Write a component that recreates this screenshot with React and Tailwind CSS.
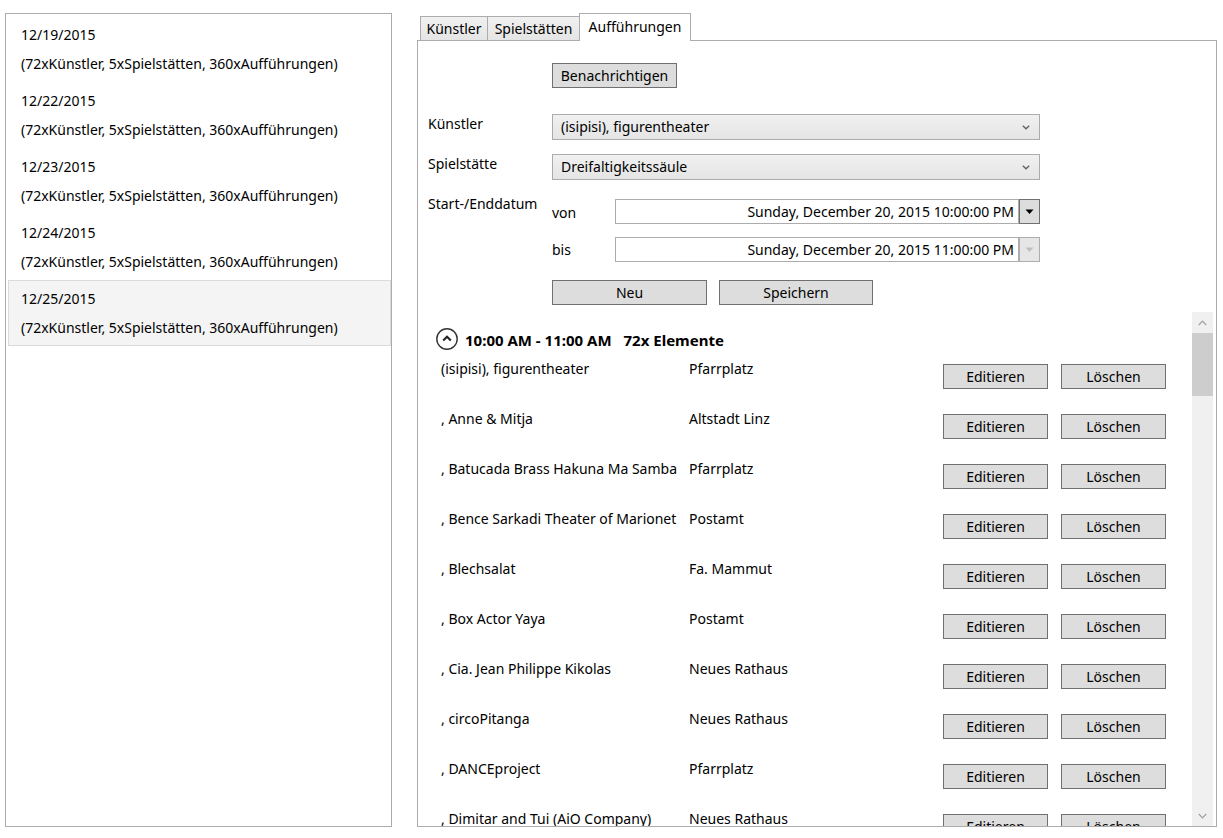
import React from "react";

const dates = ["12/19/2015", "12/22/2015", "12/23/2015", "12/24/2015", "12/25/2015"];

const rows = [
  ["(isipisi), figurentheater", "Pfarrplatz"],
  [", Anne & Mitja", "Altstadt Linz"],
  [", Batucada Brass Hakuna Ma Samba", "Pfarrplatz"],
  [", Bence Sarkadi Theater of Marionet", "Postamt"],
  [", Blechsalat", "Fa. Mammut"],
  [", Box Actor Yaya", "Postamt"],
  [", Cia. Jean Philippe Kikolas", "Neues Rathaus"],
  [", circoPitanga", "Neues Rathaus"],
  [", DANCEproject", "Pfarrplatz"],
  [", Dimitar and Tui (AiO Company)", "Neues Rathaus"],
];

function Btn({ children, className = "" }) {
  return (
    <div
      className={
        "flex items-center justify-center border border-[#707070] bg-[#dddddd] leading-[20px] text-black " +
        className
      }
    >
      {children}
    </div>
  );
}

function Combo({ value }) {
  return (
    <div className="flex h-[26px] w-[488px] items-center justify-between border border-[#acacac] bg-gradient-to-b from-[#f0f0f0] to-[#e5e5e5] pl-[8px] pr-[9px]">
      <span className="leading-[20px]">{value}</span>
      <svg width="8" height="5" viewBox="0 0 8 5">
        <path d="M0.8 0.8 L4 3.8 L7.2 0.8" fill="none" stroke="#606060" strokeWidth="1.3" />
      </svg>
    </div>
  );
}

function DatePicker({ value, disabled }) {
  return (
    <div className="flex h-[25px]">
      <div className="flex h-full w-[404px] items-center justify-end border border-[#acacac] bg-white pr-[4px] leading-[20px]">
        {value}
      </div>
      <div
        className={
          "flex h-full w-[21px] items-center justify-center border " +
          (disabled ? "border-[#adadad] bg-[#e6e6e6]" : "border-[#707070] bg-[#dddddd]")
        }
      >
        <svg width="9" height="6" viewBox="0 0 9 6">
          <path d="M0.5 0.5 L8.5 0.5 L4.5 5 Z" fill={disabled ? "#bfbfbf" : "#000"} />
        </svg>
      </div>
    </div>
  );
}

export default function App() {
  return (
    <div className="flex h-[838px] w-[1223px] bg-white font-['Noto_Sans',sans-serif] text-[14px] text-black">
      {/* Left list */}
      <div className="ml-[5px] mt-[13px] h-[814px] w-[387px] border border-[#acacac] pl-[2px] pt-[2px]">
        {dates.map((d, i) => (
          <div
            key={d}
            className={
              "h-[66px] w-[383px] border pl-[12px] pt-[8px] " +
              (i === 4 ? "border-[#dadada] bg-[#f4f4f4]" : "border-transparent")
            }
          >
            <div className="leading-[20px]">{d}</div>
            <div className="mt-[9px] leading-[20px]">(72xKünstler, 5xSpielstätten, 360xAufführungen)</div>
          </div>
        ))}
      </div>

      {/* Right tabs */}
      <div className="ml-[25px] mt-[13px] flex w-[800px] flex-col">
        <div className="flex h-[27px] items-start pl-[3px]">
          <div className="mt-[3px] flex h-[24px] w-[68px] items-center justify-center border-l border-r border-t border-[#acacac] bg-gradient-to-b from-[#f0f0f0] to-[#e5e5e5] leading-[20px]">
            Künstler
          </div>
          <div className="-ml-px mt-[3px] flex h-[24px] w-[93px] items-center justify-center border-l border-r border-t border-[#acacac] bg-gradient-to-b from-[#f0f0f0] to-[#e5e5e5] leading-[20px]">
            Spielstätten
          </div>
          <div className="relative z-10 -ml-px flex h-[28px] w-[112px] items-center justify-center border-l border-r border-t border-[#acacac] bg-white pb-[1px] leading-[20px]">
            Aufführungen
          </div>
        </div>

        <div className="flex h-[787px] flex-col border border-[#acacac] bg-white">
          <div className="flex flex-col pl-[10px]">
            <Btn className="ml-[124px] mt-[22px] h-[25px] w-[125px]">Benachrichtigen</Btn>

            <div className="mt-[26px] flex items-start">
              <div className="w-[124px] leading-[20px]">Künstler</div>
              <Combo value="(isipisi), figurentheater" />
            </div>

            <div className="mt-[14px] flex items-start">
              <div className="w-[124px] leading-[20px]">Spielstätte</div>
              <Combo value="Dreifaltigkeitssäule" />
            </div>

            <div className="mt-[14px] flex items-start">
              <div className="w-[124px] leading-[20px]">Start-/Enddatum</div>
              <div className="flex flex-col pt-[5px]">
                <div className="flex items-start">
                  <div className="w-[63px] pt-[4px] leading-[20px]">von</div>
                  <DatePicker value="Sunday, December 20, 2015 10:00:00 PM" />
                </div>
                <div className="mt-[13px] flex items-start">
                  <div className="w-[63px] pt-[3px] leading-[20px]">bis</div>
                  <DatePicker value="Sunday, December 20, 2015 11:00:00 PM" disabled />
                </div>
              </div>
            </div>

            <div className="ml-[124px] mt-[18px] flex gap-[12px]">
              <Btn className="h-[25px] w-[155px]">Neu</Btn>
              <Btn className="h-[25px] w-[154px]">Speichern</Btn>
            </div>
          </div>

          {/* Scroll area */}
          <div className="mt-[7px] flex min-h-0 flex-1">
            <div className="min-w-0 flex-1 overflow-hidden pl-[18px]">
              <div className="mt-[16px] flex h-[22px] items-center text-[15px] font-bold">
                <svg width="22" height="22" viewBox="0 0 22 22">
                  <circle cx="11" cy="11" r="10.2" fill="none" stroke="#333" strokeWidth="1.4" />
                  <path d="M7.2 12.6 L11 8.8 L14.8 12.6" fill="none" stroke="#222" strokeWidth="2.1" />
                </svg>
                <span className="ml-[7px] pt-[1px] leading-[20px]">10:00 AM - 11:00 AM</span>
                <span className="ml-[12px] pt-[1px] leading-[20px]">72x Elemente</span>
              </div>
              <div className="mt-[9px] flex flex-col pl-[5px]">
                {rows.map(([n, p]) => (
                  <div key={n} className="flex h-[50px] shrink-0 items-start">
                    <div className="w-[248px] leading-[20px]">{n}</div>
                    <div className="w-[254px] leading-[20px]">{p}</div>
                    <Btn className="mt-[5px] h-[25px] w-[105px]">Editieren</Btn>
                    <Btn className="ml-[13px] mt-[5px] h-[25px] w-[105px]">Löschen</Btn>
                  </div>
                ))}
              </div>
            </div>
            <div className="mr-[3px] flex w-[21px] flex-col bg-[#f0f0f0]">
              <div className="flex h-[21px] items-center justify-center">
                <svg width="9" height="6" viewBox="0 0 9 6">
                  <path d="M0.8 5 L4.5 1.2 L8.2 5" fill="none" stroke="#a0a0a0" strokeWidth="1.2" />
                </svg>
              </div>
              <div className="h-[63px] bg-[#cdcdcd]" />
              <div className="flex-1" />
              <div className="flex h-[21px] items-center justify-center">
                <svg width="9" height="6" viewBox="0 0 9 6">
                  <path d="M0.8 1 L4.5 4.8 L8.2 1" fill="none" stroke="#a0a0a0" strokeWidth="1.2" />
                </svg>
              </div>
            </div>
          </div>
        </div>
      </div>
    </div>
  );
}
